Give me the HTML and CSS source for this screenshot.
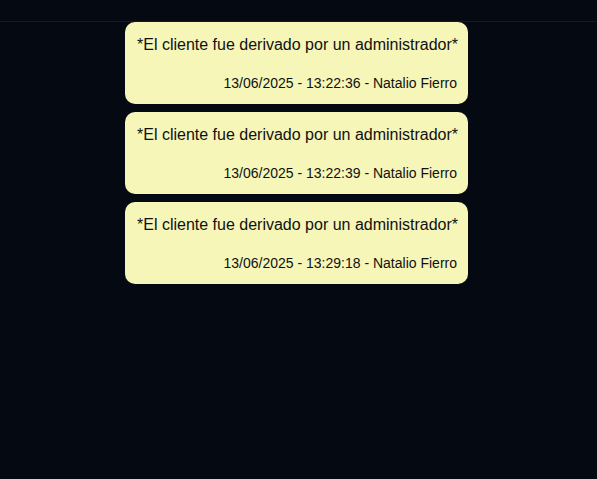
FILE: index.html
```html
<!DOCTYPE html>
<html lang="es">
<head>
<meta charset="utf-8">
<title>Mensajes</title>
<link rel="stylesheet" href="styles.css">
</head>
<body>
<div class="topbar"></div>
<main class="feed">
  <div class="note">
    <p class="note-text">*El cliente fue derivado por un administrador*</p>
    <p class="note-meta">13/06/2025 - 13:22:36 - Natalio Fierro</p>
  </div>
  <div class="note">
    <p class="note-text">*El cliente fue derivado por un administrador*</p>
    <p class="note-meta">13/06/2025 - 13:22:39 - Natalio Fierro</p>
  </div>
  <div class="note">
    <p class="note-text">*El cliente fue derivado por un administrador*</p>
    <p class="note-meta">13/06/2025 - 13:29:18 - Natalio Fierro</p>
  </div>
</main>
</body>
</html>
```
FILE: styles.css
```css
html, body {
  margin: 0;
  padding: 0;
  background: #050a12;
  height: 100%;
}
body {
  font-family: "Liberation Sans", Arial, sans-serif;
  color: #111111;
}
.topbar {
  height: 21px;
  border-bottom: 1px solid #131b25;
}
.feed {
  display: flex;
  flex-direction: column;
  align-items: center;
  gap: 8px;
  padding-right: 4px;
}
.note {
  box-sizing: border-box;
  width: 343px;
  background: #f6f6b9;
  border-radius: 10px;
  padding: 14px 11px 13px 12px;
  white-space: nowrap;
}
.note-text {
  margin: 0;
  font-size: 16px;
  line-height: 18px;
}
.note-meta {
  margin: 21px 0 0 0;
  font-size: 14px;
  line-height: 16px;
  text-align: right;
}
```
